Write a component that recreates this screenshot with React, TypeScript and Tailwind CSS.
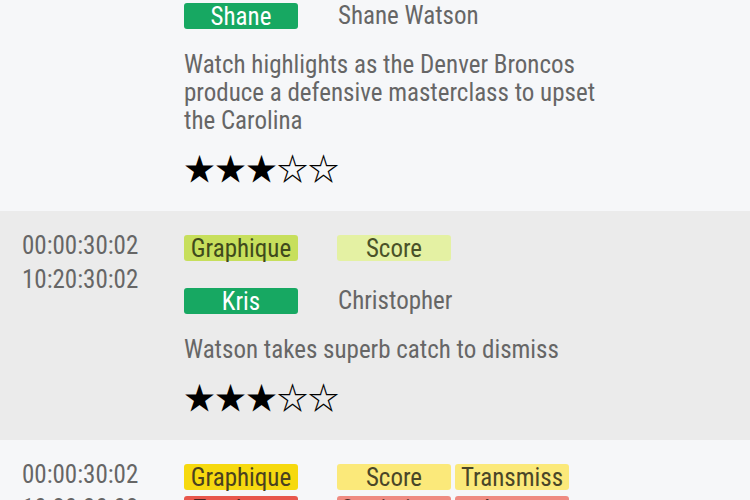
type Tag = { label: string; bg: string; text: string }

type Clip = {
  tcIn: string
  tcOut: string
  lines: { first: Tag; rest: Tag[] }[]
  person: { short: string; full: string }
  description: string
  rating: number
  bg: string
}

const clips: Clip[] = [
  {
    tcIn: '00:00:28:14',
    tcOut: '10:20:28:14',
    lines: [
      {
        first: { label: 'Graphique', bg: 'bg-[#f6d90f]', text: 'text-[#4a4120]' },
        rest: [{ label: 'Score', bg: 'bg-[#fbe97a]', text: 'text-[#4a4628]' }],
      },
      {
        first: { label: 'Tendance', bg: 'bg-[#c7df5c]', text: 'text-[#3f4a1c]' },
        rest: [{ label: 'Action', bg: 'bg-[#e4f1a3]', text: 'text-[#4a5228]' }],
      },
    ],
    person: { short: 'Shane', full: 'Shane Watson' },
    description: 'Watch highlights as the Denver Broncos produce a defensive masterclass to upset the Carolina',
    rating: 3,
    bg: 'bg-[#f6f7f9]',
  },
  {
    tcIn: '00:00:30:02',
    tcOut: '10:20:30:02',
    lines: [
      {
        first: { label: 'Graphique', bg: 'bg-[#c7df5c]', text: 'text-[#3f4a1c]' },
        rest: [{ label: 'Score', bg: 'bg-[#e4f1a3]', text: 'text-[#4a5228]' }],
      },
    ],
    person: { short: 'Kris', full: 'Christopher' },
    description: 'Watson takes superb catch to dismiss',
    rating: 3,
    bg: 'bg-[#ebebeb]',
  },
  {
    tcIn: '00:00:30:02',
    tcOut: '10:20:30:02',
    lines: [
      {
        first: { label: 'Graphique', bg: 'bg-[#f6d90f]', text: 'text-[#4a4120]' },
        rest: [
          { label: 'Score', bg: 'bg-[#fbe97a]', text: 'text-[#4a4628]' },
          { label: 'Transmiss', bg: 'bg-[#fbe97a]', text: 'text-[#4a4628]' },
        ],
      },
      {
        first: { label: 'Tendance', bg: 'bg-[#e8574c]', text: 'text-[#4a2420]' },
        rest: [
          { label: 'Statistique', bg: 'bg-[#ef8b82]', text: 'text-[#4a2c28]' },
          { label: 'Joueur', bg: 'bg-[#ef8b82]', text: 'text-[#4a2c28]' },
        ],
      },
    ],
    person: { short: 'Peyton', full: 'Peyton Manning' },
    description: 'Manning leads the drive down the field',
    rating: 4,
    bg: 'bg-[#f6f7f9]',
  },
]

function Pill({ tag }: { tag: Tag }) {
  return (
    <span
      className={`w-[114px] h-[26px] rounded-[3px] text-center leading-[27px] text-[25px] ${tag.bg} ${tag.text}`}
    >
      {tag.label}
    </span>
  )
}

function Stars({ value }: { value: number }) {
  return (
    <div
      className="text-[31px] leading-[36px] text-black"
      style={{ fontFamily: '"Noto Sans CJK SC", sans-serif' }}
    >
      {[1, 2, 3, 4, 5].map((i) => (i <= value ? '★' : '☆')).join('')}
    </div>
  )
}

function ClipRow({ clip }: { clip: Clip }) {
  return (
    <div className={`flex pt-6 pb-[26px] ${clip.bg}`}>
      {/* timecodes */}
      <div className="w-[184px] shrink-0 pl-[22px] -mt-[6px] leading-[34px] text-[25px] text-[#666]">
        <div>{clip.tcIn}</div>
        <div>{clip.tcOut}</div>
      </div>

      <div className="flex flex-col">
        <div className="flex flex-col gap-[6px]">
          {clip.lines.map((line, i) => (
            <div key={i} className="flex">
              <Pill tag={line.first} />
              <div className="flex gap-[4px] ml-[39px]">
                {line.rest.map((t) => (
                  <Pill key={t.label} tag={t} />
                ))}
              </div>
            </div>
          ))}
        </div>

        <div className="flex items-center mt-[27px]">
          <span className="w-[114px] h-[26px] rounded-[3px] bg-[#17a862] text-white text-center text-[25px] leading-[27px]">
            {clip.person.short}
          </span>
          <span className="ml-[40px] text-[25px] leading-[26px] text-[#666]">{clip.person.full}</span>
        </div>

        <p className="mt-[22px] w-[420px] text-[25px] leading-[28px] text-[#666]">{clip.description}</p>

        <div className="mt-[14px]">
          <Stars value={clip.rating} />
        </div>
      </div>
    </div>
  )
}

export default function App() {
  return (
    <div
      className="h-[500px] overflow-hidden bg-[#f6f7f9]"
      style={{ fontFamily: '"Roboto Condensed", "Liberation Sans Narrow", sans-serif' }}
    >
      {/* list is scrolled so the first clip is partly above the window */}
      <div className="-mt-[106px]">
        {clips.map((c, i) => (
          <ClipRow key={i} clip={c} />
        ))}
      </div>
    </div>
  )
}
